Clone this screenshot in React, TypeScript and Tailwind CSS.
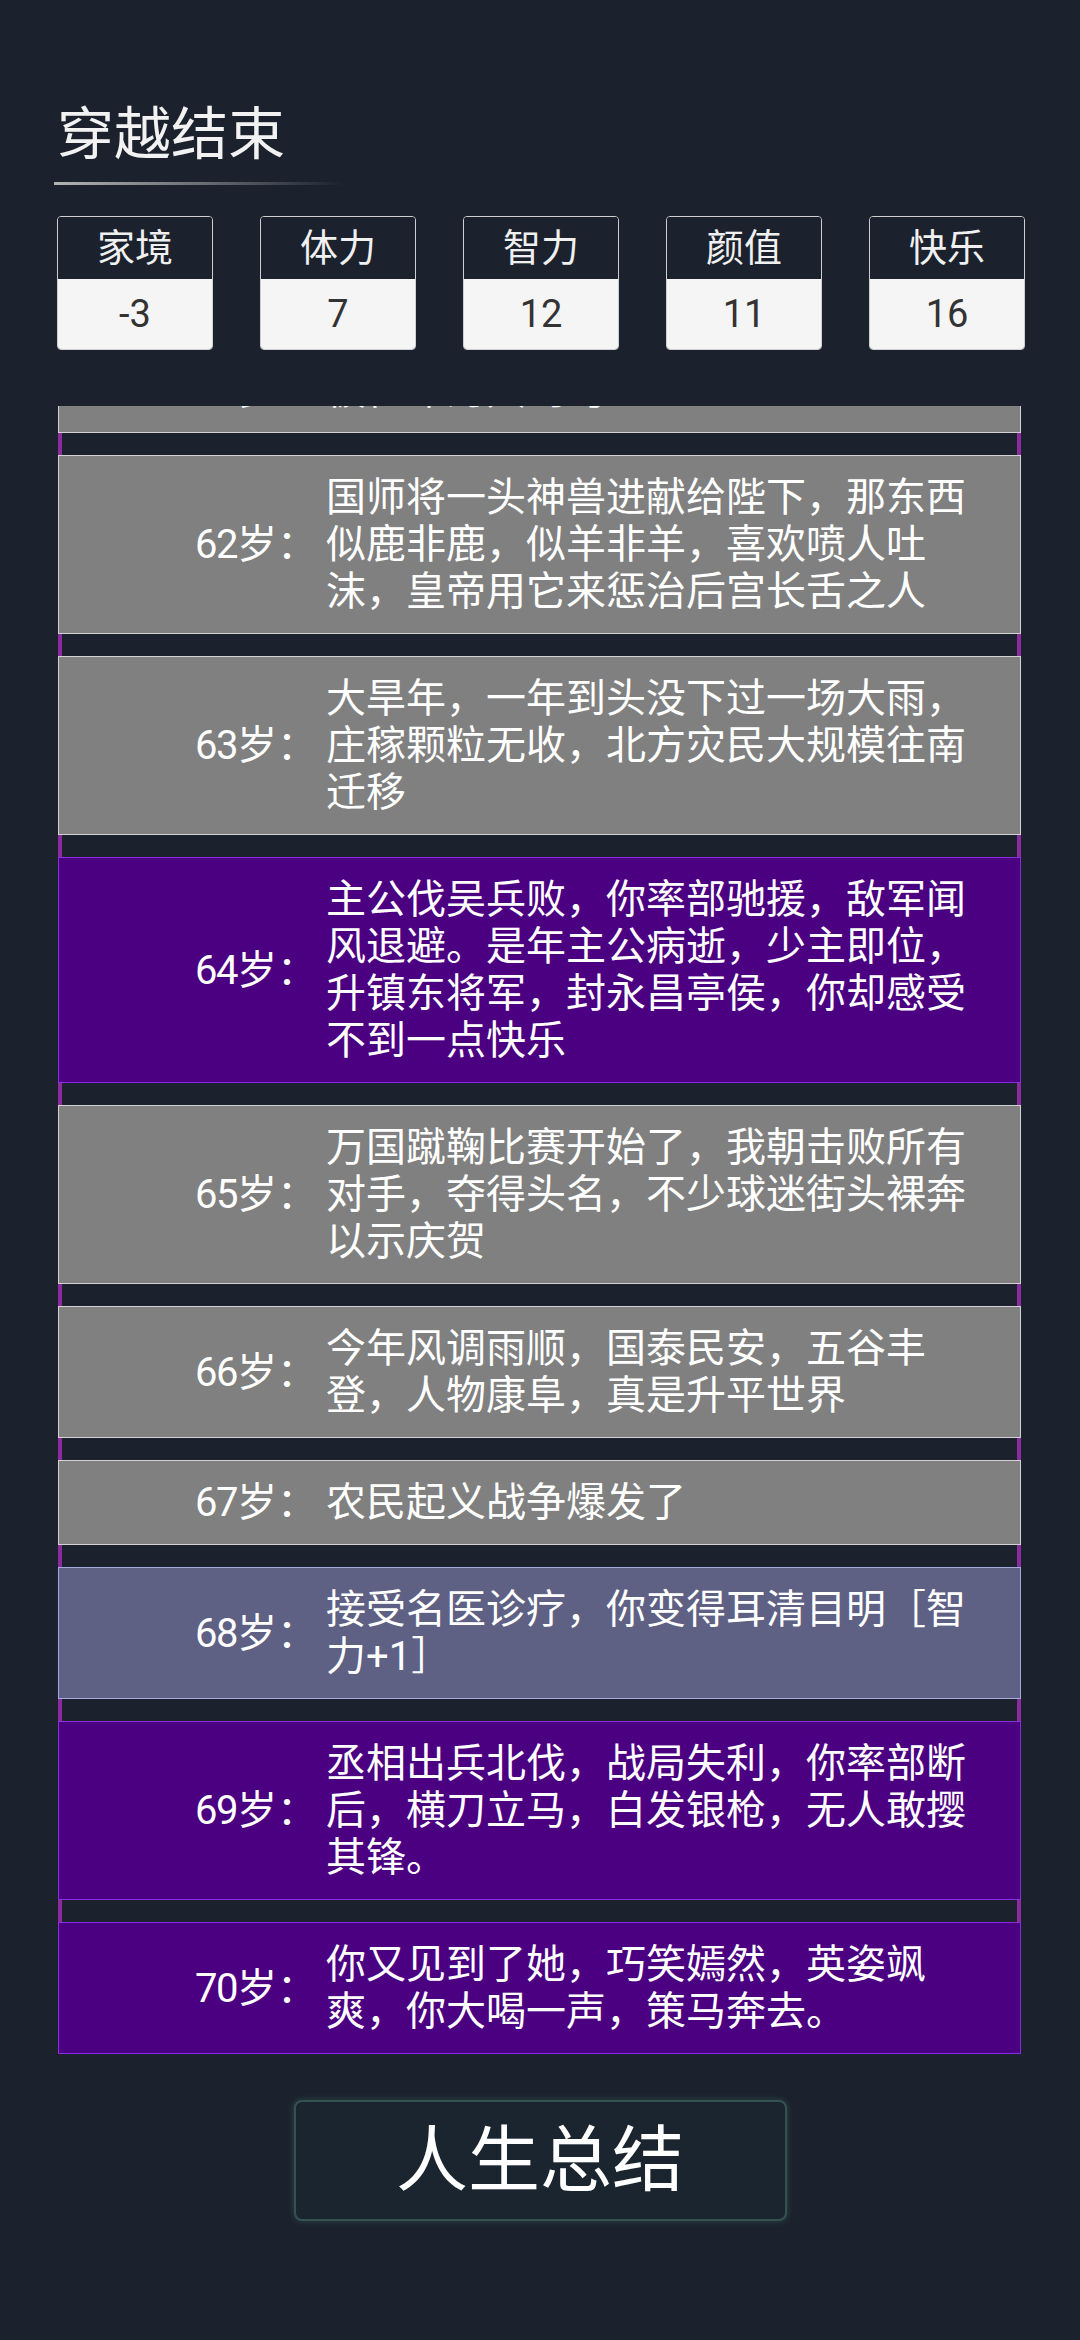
import React from 'react';

type Tone = 'gray' | 'purple' | 'blue';

interface LifeEvent {
  age: number;
  text: string;
  tone: Tone;
}

const stats = [
  { label: '家境', value: '-3' },
  { label: '体力', value: '7' },
  { label: '智力', value: '12' },
  { label: '颜值', value: '11' },
  { label: '快乐', value: '16' },
];

const events: LifeEvent[] = [
  { age: 61, text: '被任命为大司马', tone: 'gray' },
  { age: 62, text: '国师将一头神兽进献给陛下，那东西似鹿非鹿，似羊非羊，喜欢喷人吐沫，皇帝用它来惩治后宫长舌之人', tone: 'gray' },
  { age: 63, text: '大旱年，一年到头没下过一场大雨，庄稼颗粒无收，北方灾民大规模往南迁移', tone: 'gray' },
  { age: 64, text: '主公伐吴兵败，你率部驰援，敌军闻风退避。是年主公病逝，少主即位，升镇东将军，封永昌亭侯，你却感受不到一点快乐', tone: 'purple' },
  { age: 65, text: '万国蹴鞠比赛开始了，我朝击败所有对手，夺得头名，不少球迷街头裸奔以示庆贺', tone: 'gray' },
  { age: 66, text: '今年风调雨顺，国泰民安，五谷丰登，人物康阜，真是升平世界', tone: 'gray' },
  { age: 67, text: '农民起义战争爆发了', tone: 'gray' },
  { age: 68, text: '接受名医诊疗，你变得耳清目明［智力+1］', tone: 'blue' },
  { age: 69, text: '丞相出兵北伐，战局失利，你率部断后，横刀立马，白发银枪，无人敢撄其锋。', tone: 'purple' },
  { age: 70, text: '你又见到了她，巧笑嫣然，英姿飒爽，你大喝一声，策马奔去。', tone: 'purple' },
];

const toneClass: Record<Tone, string> = {
  gray: 'bg-[#808080] border-[#d2d2d2]',
  purple: 'bg-[#4b0082] border-[#8a2be2]',
  blue: 'bg-[#5e6084] border-[#a4aade]',
};

const App: React.FC = () => {
  return (
    <div
      className="w-[1080px] h-[2340px] bg-[#1b222d] text-white overflow-hidden"
      style={{ fontFamily: 'Roboto, "Noto Sans CJK SC", sans-serif' }}
    >
      <div className="pl-[57px] pt-[106px]">
        {/* Title */}
        <h1 className="text-[57px] leading-none text-[#f2f2f2] font-normal">穿越结束</h1>
        <div className="mt-[19px] -ml-[3px] w-[290px] h-[3px] bg-gradient-to-r from-[#b4b4b4] via-[#6b6f76] to-transparent" />

        {/* Stats */}
        <div className="mt-[31px] flex gap-[47px]">
          {stats.map((s) => (
            <div key={s.label} className="w-[156px] rounded-[4px] border border-[#cfcfcf] overflow-hidden">
              <div className="h-[62px] flex items-center justify-center text-[38px] text-[#f0f0f0] bg-[#1b222d]">
                {s.label}
              </div>
              <div className="h-[70px] flex items-center justify-center text-[38px] text-[#333] bg-[#f5f5f5]">
                {s.value}
              </div>
            </div>
          ))}
        </div>
      </div>

      {/* Life log, scrolled */}
      <div className="ml-[58px] mt-[56px] w-[963px] overflow-hidden">
        <div className="-mt-[58px]">
          {events.map((e, i) => (
            <div key={e.age}>
              {i > 0 && <div className="h-[22px] border-x-4 border-[#8c2aa0]" />}
              <div className={`flex items-center border py-[18px] ${toneClass[e.tone]}`}>
                <div className="w-[258px] shrink-0 text-right text-[40px] leading-[47px]">
                  <span className="tracking-[-1.5px]">{e.age}</span>岁：
                </div>
                <div className="ml-[9px] w-[660px] text-[40px] leading-[47px]">{e.text}</div>
              </div>
            </div>
          ))}
        </div>
      </div>

      {/* Summary button */}
      <div className="mt-[46px] flex justify-center">
        <button className="w-[493px] h-[121px] rounded-[8px] border-2 border-[#34524f] bg-[#1b2530] shadow-[0_0_6px_rgba(70,120,110,0.45)] text-[72px] leading-none text-white">
          人生总结
        </button>
      </div>
    </div>
  );
};

export default App;
